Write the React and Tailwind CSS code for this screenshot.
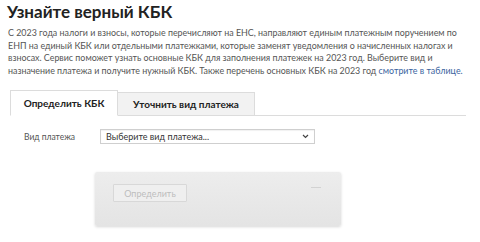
import React from 'react';

const App = () => {
    return (
        <div className="w-[480px] h-[242px] bg-white overflow-hidden text-[#333]" style={{ fontFamily: 'Lato, "Open Sans", "Liberation Sans", sans-serif' }}>
            <div className="pl-[7px]">
                <h1 className="text-[17px] font-bold leading-[23px] text-[#222]">Узнайте верный КБК</h1>
                <p className="mt-[4px] text-[8.9px] leading-[12.6px] text-[#555] pl-[1px] w-[470px]">
                    С 2023 года налоги и взносы, которые перечисляют на ЕНС, направляют единым платежным поручением по<br />
                    ЕНП на единый КБК или отдельными платежками, которые заменят уведомления о начисленных налогах и<br />
                    взносах. Сервис поможет узнать основные КБК для заполнения платежек на 2023 год. Выберите вид и<br />
                    назначение платежа и получите нужный КБК. Также перечень основных КБК на 2023 год <span className="text-[#3a64a0]">смотрите в таблице.</span>
                </p>
            </div>

            {/* Tabs */}
            <div className="mt-[14px] ml-[10px] w-[456px] flex items-end border-b border-[#dcdcdc] h-[25px]">
                <div className="h-[26px] w-[108px] -mb-px bg-white border border-[#dcdcdc] border-b-white flex items-center justify-center text-[10px] font-bold text-[#222]">
                    Определить КБК
                </div>
                <div className="h-[23px] w-[137px] bg-[#f2f2f2] border border-l-0 border-b-0 border-[#dcdcdc] flex items-center justify-center text-[10px] font-bold text-[#222]">
                    Уточнить вид платежа
                </div>
            </div>

            {/* Form row */}
            <div className="mt-[13px] flex items-center">
                <div className="w-[100px] pl-[24px] text-[8.5px] text-[#555]">Вид платежа</div>
                <div className="w-[215px] h-[15px] border border-[#cfcfcf] bg-white flex items-center justify-between px-[5px] shadow-[inset_0_1px_1px_rgba(0,0,0,0.06)]">
                    <span className="text-[9px] text-[#333]">Выберите вид платежа...</span>
                    <svg width="7" height="5" viewBox="0 0 7 5" fill="none">
                        <path d="M1 1l2.5 2.5L6 1" stroke="#444" strokeWidth="1.2" />
                    </svg>
                </div>
            </div>

            {/* Result block */}
            <div className="mt-[28px] ml-[95px] w-[246px] h-[54px] rounded-[2px] bg-gradient-to-b from-[#ededed] to-[#e4e4e4] shadow-[0_1px_3px_rgba(0,0,0,0.16)] flex items-start justify-between pt-[12px] pl-[18px] pr-[20px]">
                <div className="w-[74px] h-[18px] bg-[#efefef] border border-[#d8d8d8] rounded-[1px] flex items-center justify-center text-[9px] text-[#bdbdbd]">
                    Определить
                </div>
                <div className="mt-[3px] w-[10px] h-[1px] bg-[#d2d2d2]"></div>
            </div>
        </div>
    );
};

export default App;
